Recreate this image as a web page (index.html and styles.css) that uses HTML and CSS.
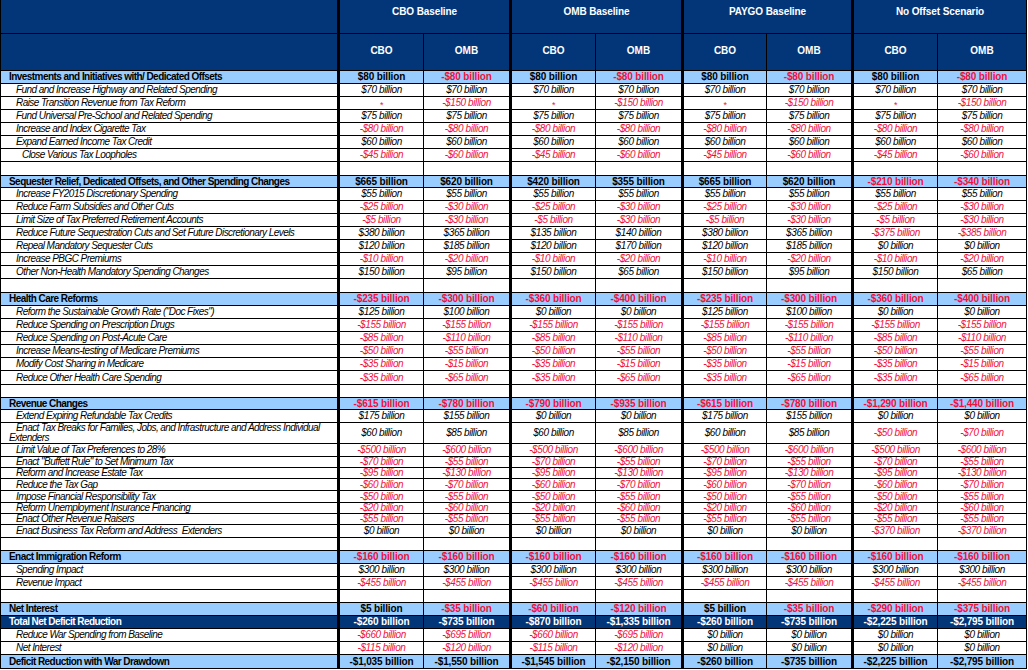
FILE: index.html
```html
<!DOCTYPE html>
<html lang="en">
<head>
<meta charset="utf-8">
<title>Budget Scenarios</title>
<link rel="stylesheet" href="styles.css">
</head>
<body>
<div class="sheet">
  <div class="head1">
    <div class="hlab"></div>
    <div class="hgrp">CBO Baseline</div>
    <div class="hgrp">OMB Baseline</div>
    <div class="hgrp">PAYGO Baseline</div>
    <div class="hgrp last">No Offset Scenario</div>
  </div>
  <div class="row head2 h37">
    <div class="lab"></div>
    <div>CBO</div><div>OMB</div><div>CBO</div><div>OMB</div><div>CBO</div><div>OMB</div><div>CBO</div><div>OMB</div>
  </div>

  <div class="row sec h13">
    <div class="lab">Investments and Initiatives with/ Dedicated Offsets</div>
    <div>$80 billion</div><div class="neg">-$80 billion</div><div>$80 billion</div><div class="neg">-$80 billion</div><div>$80 billion</div><div class="neg">-$80 billion</div><div>$80 billion</div><div class="neg">-$80 billion</div>
  </div>
  <div class="row item h13">
    <div class="lab">Fund and Increase Highway and Related Spending</div>
    <div>$70 billion</div><div>$70 billion</div><div>$70 billion</div><div>$70 billion</div><div>$70 billion</div><div>$70 billion</div><div>$70 billion</div><div>$70 billion</div>
  </div>
  <div class="row item h13">
    <div class="lab">Raise Transition Revenue from Tax Reform</div>
    <div class="neg"><span class="ast">*</span></div><div class="neg">-$150 billion</div><div class="neg"><span class="ast">*</span></div><div class="neg">-$150 billion</div><div class="neg"><span class="ast">*</span></div><div class="neg">-$150 billion</div><div class="neg"><span class="ast">*</span></div><div class="neg">-$150 billion</div>
  </div>
  <div class="row item h13">
    <div class="lab">Fund Universal Pre-School and Related Spending</div>
    <div>$75 billion</div><div>$75 billion</div><div>$75 billion</div><div>$75 billion</div><div>$75 billion</div><div>$75 billion</div><div>$75 billion</div><div>$75 billion</div>
  </div>
  <div class="row item h13">
    <div class="lab">Increase and Index Cigarette Tax</div>
    <div class="neg">-$80 billion</div><div class="neg">-$80 billion</div><div class="neg">-$80 billion</div><div class="neg">-$80 billion</div><div class="neg">-$80 billion</div><div class="neg">-$80 billion</div><div class="neg">-$80 billion</div><div class="neg">-$80 billion</div>
  </div>
  <div class="row item h13">
    <div class="lab">Expand Earned Income Tax Credit</div>
    <div>$60 billion</div><div>$60 billion</div><div>$60 billion</div><div>$60 billion</div><div>$60 billion</div><div>$60 billion</div><div>$60 billion</div><div>$60 billion</div>
  </div>
  <div class="row item h13">
    <div class="lab deep">Close Various Tax Loopholes</div>
    <div class="neg">-$45 billion</div><div class="neg">-$60 billion</div><div class="neg">-$45 billion</div><div class="neg">-$60 billion</div><div class="neg">-$45 billion</div><div class="neg">-$60 billion</div><div class="neg">-$45 billion</div><div class="neg">-$60 billion</div>
  </div>
  <div class="row blank h14">
    <div class="lab"></div><div></div><div></div><div></div><div></div><div></div><div></div><div></div><div></div>
  </div>

  <div class="row sec h12">
    <div class="lab">Sequester Relief, Dedicated Offsets, and Other Spending Changes</div>
    <div>$665 billion</div><div>$620 billion</div><div>$420 billion</div><div>$355 billion</div><div>$665 billion</div><div>$620 billion</div><div class="neg">-$210 billion</div><div class="neg">-$340 billion</div>
  </div>
  <div class="row item h13">
    <div class="lab">Increase FY2015 Discretionary Spending</div>
    <div>$55 billion</div><div>$55 billion</div><div>$55 billion</div><div>$55 billion</div><div>$55 billion</div><div>$55 billion</div><div>$55 billion</div><div>$55 billion</div>
  </div>
  <div class="row item h13">
    <div class="lab">Reduce Farm Subsidies and Other Cuts</div>
    <div class="neg">-$25 billion</div><div class="neg">-$30 billion</div><div class="neg">-$25 billion</div><div class="neg">-$30 billion</div><div class="neg">-$25 billion</div><div class="neg">-$30 billion</div><div class="neg">-$25 billion</div><div class="neg">-$30 billion</div>
  </div>
  <div class="row item h13">
    <div class="lab">Limit Size of Tax Preferred Retirement Accounts</div>
    <div class="neg">-$5 billion</div><div class="neg">-$30 billion</div><div class="neg">-$5 billion</div><div class="neg">-$30 billion</div><div class="neg">-$5 billion</div><div class="neg">-$30 billion</div><div class="neg">-$5 billion</div><div class="neg">-$30 billion</div>
  </div>
  <div class="row item h13">
    <div class="lab">Reduce Future Sequestration Cuts and Set Future Discretionary Levels</div>
    <div>$380 billion</div><div>$365 billion</div><div>$135 billion</div><div>$140 billion</div><div>$380 billion</div><div>$365 billion</div><div class="neg">-$375 billion</div><div class="neg">-$385 billion</div>
  </div>
  <div class="row item h13">
    <div class="lab">Repeal Mandatory Sequester Cuts</div>
    <div>$120 billion</div><div>$185 billion</div><div>$120 billion</div><div>$170 billion</div><div>$120 billion</div><div>$185 billion</div><div>$0 billion</div><div>$0 billion</div>
  </div>
  <div class="row item h13">
    <div class="lab">Increase PBGC Premiums</div>
    <div class="neg">-$10 billion</div><div class="neg">-$20 billion</div><div class="neg">-$10 billion</div><div class="neg">-$20 billion</div><div class="neg">-$10 billion</div><div class="neg">-$20 billion</div><div class="neg">-$10 billion</div><div class="neg">-$20 billion</div>
  </div>
  <div class="row item h13">
    <div class="lab">Other Non-Health Mandatory Spending Changes</div>
    <div>$150 billion</div><div>$95 billion</div><div>$150 billion</div><div>$65 billion</div><div>$150 billion</div><div>$95 billion</div><div>$150 billion</div><div>$65 billion</div>
  </div>
  <div class="row blank h14">
    <div class="lab"></div><div></div><div></div><div></div><div></div><div></div><div></div><div></div><div></div>
  </div>

  <div class="row sec h13">
    <div class="lab">Health Care Reforms</div>
    <div class="neg">-$235 billion</div><div class="neg">-$300 billion</div><div class="neg">-$360 billion</div><div class="neg">-$400 billion</div><div class="neg">-$235 billion</div><div class="neg">-$300 billion</div><div class="neg">-$360 billion</div><div class="neg">-$400 billion</div>
  </div>
  <div class="row item h13">
    <div class="lab">Reform the Sustainable Growth Rate ("Doc Fixes")</div>
    <div>$125 billion</div><div>$100 billion</div><div>$0 billion</div><div>$0 billion</div><div>$125 billion</div><div>$100 billion</div><div>$0 billion</div><div>$0 billion</div>
  </div>
  <div class="row item h13">
    <div class="lab">Reduce Spending on Prescription Drugs</div>
    <div class="neg">-$155 billion</div><div class="neg">-$155 billion</div><div class="neg">-$155 billion</div><div class="neg">-$155 billion</div><div class="neg">-$155 billion</div><div class="neg">-$155 billion</div><div class="neg">-$155 billion</div><div class="neg">-$155 billion</div>
  </div>
  <div class="row item h13">
    <div class="lab">Reduce Spending on Post-Acute Care</div>
    <div class="neg">-$85 billion</div><div class="neg">-$110 billion</div><div class="neg">-$85 billion</div><div class="neg">-$110 billion</div><div class="neg">-$85 billion</div><div class="neg">-$110 billion</div><div class="neg">-$85 billion</div><div class="neg">-$110 billion</div>
  </div>
  <div class="row item h13">
    <div class="lab">Increase Means-testing of Medicare Premiums</div>
    <div class="neg">-$50 billion</div><div class="neg">-$55 billion</div><div class="neg">-$50 billion</div><div class="neg">-$55 billion</div><div class="neg">-$50 billion</div><div class="neg">-$55 billion</div><div class="neg">-$50 billion</div><div class="neg">-$55 billion</div>
  </div>
  <div class="row item h13">
    <div class="lab">Modify Cost Sharing in Medicare</div>
    <div class="neg">-$35 billion</div><div class="neg">-$15 billion</div><div class="neg">-$35 billion</div><div class="neg">-$15 billion</div><div class="neg">-$35 billion</div><div class="neg">-$15 billion</div><div class="neg">-$35 billion</div><div class="neg">-$15 billion</div>
  </div>
  <div class="row item h14">
    <div class="lab">Reduce Other Health Care Spending</div>
    <div class="neg">-$35 billion</div><div class="neg">-$65 billion</div><div class="neg">-$35 billion</div><div class="neg">-$65 billion</div><div class="neg">-$35 billion</div><div class="neg">-$65 billion</div><div class="neg">-$35 billion</div><div class="neg">-$65 billion</div>
  </div>
  <div class="row blank h13">
    <div class="lab"></div><div></div><div></div><div></div><div></div><div></div><div></div><div></div><div></div>
  </div>

  <div class="row sec h12">
    <div class="lab">Revenue Changes</div>
    <div class="neg">-$615 billion</div><div class="neg">-$780 billion</div><div class="neg">-$790 billion</div><div class="neg">-$935 billion</div><div class="neg">-$615 billion</div><div class="neg">-$780 billion</div><div class="neg">-$1,290 billion</div><div class="neg">-$1,440 billion</div>
  </div>
  <div class="row item h13">
    <div class="lab">Extend Expiring Refundable Tax Credits</div>
    <div>$175 billion</div><div>$155 billion</div><div>$0 billion</div><div>$0 billion</div><div>$175 billion</div><div>$155 billion</div><div>$0 billion</div><div>$0 billion</div>
  </div>
  <div class="row item h21">
    <div class="lab wrap"><span>Enact Tax Breaks for Families, Jobs, and Infrastructure and Address Individual<br>Extenders</span></div>
    <div>$60 billion</div><div>$85 billion</div><div>$60 billion</div><div>$85 billion</div><div>$60 billion</div><div>$85 billion</div><div class="neg">-$50 billion</div><div class="neg">-$70 billion</div>
  </div>
  <div class="row item h13">
    <div class="lab">Limit Value of Tax Preferences to 28%</div>
    <div class="neg">-$500 billion</div><div class="neg">-$600 billion</div><div class="neg">-$500 billion</div><div class="neg">-$600 billion</div><div class="neg">-$500 billion</div><div class="neg">-$600 billion</div><div class="neg">-$500 billion</div><div class="neg">-$600 billion</div>
  </div>
  <div class="row item h11">
    <div class="lab">Enact "Buffett Rule" to Set Minimum Tax</div>
    <div class="neg">-$70 billion</div><div class="neg">-$55 billion</div><div class="neg">-$70 billion</div><div class="neg">-$55 billion</div><div class="neg">-$70 billion</div><div class="neg">-$55 billion</div><div class="neg">-$70 billion</div><div class="neg">-$55 billion</div>
  </div>
  <div class="row item h11">
    <div class="lab">Reform and Increase Estate Tax</div>
    <div class="neg">-$95 billion</div><div class="neg">-$130 billion</div><div class="neg">-$95 billion</div><div class="neg">-$130 billion</div><div class="neg">-$95 billion</div><div class="neg">-$130 billion</div><div class="neg">-$95 billion</div><div class="neg">-$130 billion</div>
  </div>
  <div class="row item h12">
    <div class="lab">Reduce the Tax Gap</div>
    <div class="neg">-$60 billion</div><div class="neg">-$70 billion</div><div class="neg">-$60 billion</div><div class="neg">-$70 billion</div><div class="neg">-$60 billion</div><div class="neg">-$70 billion</div><div class="neg">-$60 billion</div><div class="neg">-$70 billion</div>
  </div>
  <div class="row item h12">
    <div class="lab">Impose Financial Responsibility Tax</div>
    <div class="neg">-$50 billion</div><div class="neg">-$55 billion</div><div class="neg">-$50 billion</div><div class="neg">-$55 billion</div><div class="neg">-$50 billion</div><div class="neg">-$55 billion</div><div class="neg">-$50 billion</div><div class="neg">-$55 billion</div>
  </div>
  <div class="row item h11">
    <div class="lab">Reform Unemployment Insurance Financing</div>
    <div class="neg">-$20 billion</div><div class="neg">-$60 billion</div><div class="neg">-$20 billion</div><div class="neg">-$60 billion</div><div class="neg">-$20 billion</div><div class="neg">-$60 billion</div><div class="neg">-$20 billion</div><div class="neg">-$60 billion</div>
  </div>
  <div class="row item h11">
    <div class="lab">Enact Other Revenue Raisers</div>
    <div class="neg">-$55 billion</div><div class="neg">-$55 billion</div><div class="neg">-$55 billion</div><div class="neg">-$55 billion</div><div class="neg">-$55 billion</div><div class="neg">-$55 billion</div><div class="neg">-$55 billion</div><div class="neg">-$55 billion</div>
  </div>
  <div class="row item h13">
    <div class="lab">Enact Business Tax Reform and Address&nbsp; Extenders</div>
    <div>$0 billion</div><div>$0 billion</div><div>$0 billion</div><div>$0 billion</div><div>$0 billion</div><div>$0 billion</div><div class="neg">-$370 billion</div><div class="neg">-$370 billion</div>
  </div>
  <div class="row blank h13">
    <div class="lab"></div><div></div><div></div><div></div><div></div><div></div><div></div><div></div><div></div>
  </div>

  <div class="row sec h13">
    <div class="lab">Enact Immigration Reform</div>
    <div class="neg">-$160 billion</div><div class="neg">-$160 billion</div><div class="neg">-$160 billion</div><div class="neg">-$160 billion</div><div class="neg">-$160 billion</div><div class="neg">-$160 billion</div><div class="neg">-$160 billion</div><div class="neg">-$160 billion</div>
  </div>
  <div class="row item h13">
    <div class="lab">Spending Impact</div>
    <div>$300 billion</div><div>$300 billion</div><div>$300 billion</div><div>$300 billion</div><div>$300 billion</div><div>$300 billion</div><div>$300 billion</div><div>$300 billion</div>
  </div>
  <div class="row item h13">
    <div class="lab">Revenue Impact</div>
    <div class="neg">-$455 billion</div><div class="neg">-$455 billion</div><div class="neg">-$455 billion</div><div class="neg">-$455 billion</div><div class="neg">-$455 billion</div><div class="neg">-$455 billion</div><div class="neg">-$455 billion</div><div class="neg">-$455 billion</div>
  </div>
  <div class="row blank h13">
    <div class="lab"></div><div></div><div></div><div></div><div></div><div></div><div></div><div></div><div></div>
  </div>

  <div class="row sec h13">
    <div class="lab">Net Interest</div>
    <div>$5 billion</div><div class="neg">-$35 billion</div><div class="neg">-$60 billion</div><div class="neg">-$120 billion</div><div>$5 billion</div><div class="neg">-$35 billion</div><div class="neg">-$290 billion</div><div class="neg">-$375 billion</div>
  </div>
  <div class="row total h13">
    <div class="lab">Total Net Deficit Reduction</div>
    <div>-$260 billion</div><div>-$735 billion</div><div>-$870 billion</div><div>-$1,335 billion</div><div>-$260 billion</div><div>-$735 billion</div><div>-$2,225 billion</div><div>-$2,795 billion</div>
  </div>
  <div class="row item h13">
    <div class="lab">Reduce War Spending from Baseline</div>
    <div class="neg">-$660 billion</div><div class="neg">-$695 billion</div><div class="neg">-$660 billion</div><div class="neg">-$695 billion</div><div>$0 billion</div><div>$0 billion</div><div>$0 billion</div><div>$0 billion</div>
  </div>
  <div class="row item h13">
    <div class="lab">Net Interest</div>
    <div class="neg">-$115 billion</div><div class="neg">-$120 billion</div><div class="neg">-$115 billion</div><div class="neg">-$120 billion</div><div>$0 billion</div><div>$0 billion</div><div>$0 billion</div><div>$0 billion</div>
  </div>
  <div class="row sec h14">
    <div class="lab">Deficit Reduction with War Drawdown</div>
    <div>-$1,035 billion</div><div>-$1,550 billion</div><div>-$1,545 billion</div><div>-$2,150 billion</div><div>-$260 billion</div><div>-$735 billion</div><div>-$2,225 billion</div><div>-$2,795 billion</div>
  </div>
</div>
</body>
</html>
```

FILE: styles.css
```css
html, body {
  margin: 0;
  padding: 0;
  background: #ffffff;
}

body {
  font-family: "Liberation Sans", Arial, sans-serif;
  font-size: 10px;
  color: #000000;
}

.sheet {
  display: flex;
  flex-direction: column;
  width: 1027px;
}

.head1 {
  display: grid;
  grid-template-columns: 340px 172px 172px 170px 173px;
  grid-template-rows: 100%;
  height: 34px;
  background: #033678;
  color: #ffffff;
  font-weight: bold;
}

.head1 > div {
  box-sizing: border-box;
  border-bottom: 1px solid #000;
  border-right: 3px solid #000;
  display: flex;
  justify-content: center;
  align-items: flex-start;
  padding-top: 7px;
  line-height: 10px;
  letter-spacing: -0.1px;
}

.head1 > .hlab {
  border-left: 1px solid #000;
}

.head1 > .last {
  border-right-width: 1px;
}

.row {
  display: grid;
  grid-template-columns: 340px 84px 88px 84px 88px 83px 87px 84px 89px;
  grid-template-rows: 100%;
  flex: none;
}

.row > div {
  box-sizing: border-box;
  border-bottom: 1px solid #000;
  border-right: 1px solid #000;
  display: flex;
  align-items: center;
  justify-content: center;
  white-space: nowrap;
  line-height: 10px;
  letter-spacing: -0.4px;
  min-height: 0;
  overflow: hidden;
}

.row > div:nth-child(1),
.row > div:nth-child(3),
.row > div:nth-child(5),
.row > div:nth-child(7) {
  border-right-width: 3px;
}

.row > .lab {
  border-left: 1px solid #000;
  justify-content: flex-start;
  padding-left: 8px;
}

.h11 { height: 11px; }
.h12 { height: 12px; }
.h13 { height: 13px; }
.h14 { height: 14px; }
.h21 { height: 21px; }
.h37 { height: 37px; }

.head2 {
  background: #033678;
  color: #ffffff;
  font-weight: bold;
}

.head2 > div {
  letter-spacing: 0;
  padding-bottom: 2px;
}

.sec {
  background: #99ccff;
  font-weight: bold;
}

.sec > div {
  letter-spacing: -0.15px;
}

.sec > .lab {
  letter-spacing: -0.55px;
}

.total {
  background: #033678;
  color: #ffffff;
  font-weight: bold;
}

.total > div {
  letter-spacing: -0.15px;
}

.total > .lab {
  letter-spacing: -0.55px;
}

.item {
  font-style: italic;
  background: #ffffff;
}

.item > .lab {
  padding-left: 15px;
  letter-spacing: -0.55px;
}

.item > .lab.deep {
  padding-left: 21px;
}

.item > .lab.wrap {
  padding-left: 8px;
  white-space: normal;
}

.item > .lab.wrap > span {
  text-indent: 7px;
}

.neg {
  color: #f2103a;
}

.ast {
  font-style: normal;
  font-size: 9px;
  line-height: 8px;
  padding-top: 4px;
}
```
